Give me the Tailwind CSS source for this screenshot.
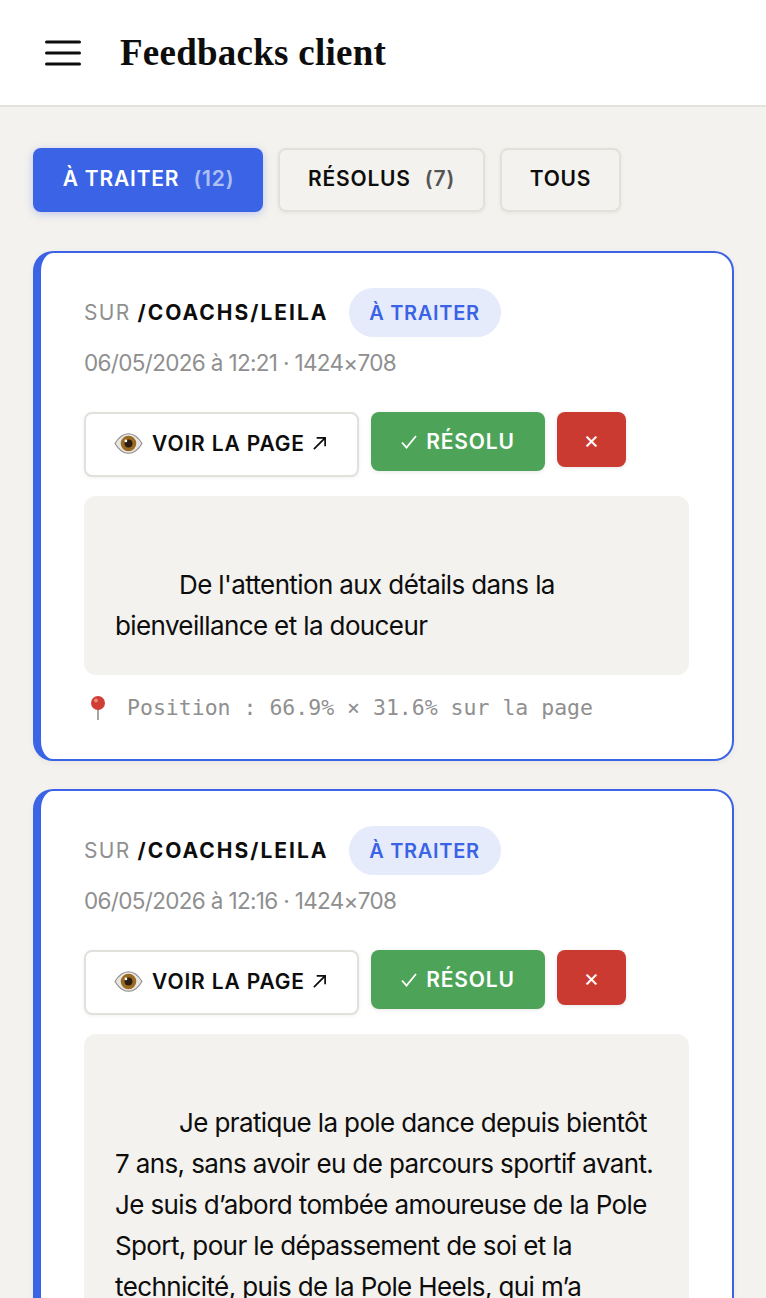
<!DOCTYPE html>
<html lang="fr">
<head>
  <meta charset="UTF-8">
  <meta name="viewport" content="width=device-width, initial-scale=1.0">
  <title>Feedbacks client</title>
  <script src="https://cdn.jsdelivr.net/npm/@tailwindcss/browser@4"></script>
</head>
<body class="bg-[#f4f2ee] h-[1298px] overflow-hidden font-['Inter',sans-serif] text-[#0d0d0d]">
  <!-- Header -->
  <header class="h-[107px] bg-white border-b-2 border-[#e4e2dd] flex items-center pl-[45px] gap-[39px]">
    <svg class="w-[36px] h-[26px]" viewBox="0 0 36 26" fill="none" stroke="#0d0d0d" stroke-width="3" stroke-linecap="round">
      <path d="M1.5 2h33M1.5 13h33M1.5 24h33"/>
    </svg>
    <h1 class="font-['Liberation_Serif',serif] font-bold text-[37px] tracking-[0.25px]">Feedbacks client</h1>
  </header>

  <main class="pl-[33px] pr-[32px] pt-[41px]">
    <!-- Onglets -->
    <div class="flex items-start gap-[15px] text-[21px] font-semibold tracking-[0.8px]">
      <button class="h-[64px] w-[230px] pb-[2px] pl-[1px] rounded-[8px] bg-[#3a63e6] text-white shadow-[0_2px_8px_rgba(58,99,230,0.3)]">À TRAITER <span class="ml-[8px] text-white/60">(12)</span></button>
      <button class="h-[64px] w-[207px] pb-[2px] rounded-[8px] border-2 border-[#e2e0da] shadow-[0_1px_4px_rgba(0,0,0,0.06)]">RÉSOLUS <span class="ml-[8px] text-[#555]">(7)</span></button>
      <button class="h-[64px] w-[121px] pb-[2px] rounded-[8px] border-2 border-[#e2e0da] shadow-[0_1px_4px_rgba(0,0,0,0.06)]">TOUS</button>
    </div>

    <!-- Carte 1 -->
    <article class="mt-[39px] h-[510px] bg-white rounded-[20px] border-2 border-l-[8px] border-[#3a63e6] pl-[43px] pr-[43px] pt-[35px] shadow-[0_2px_6px_rgba(0,0,0,0.05)]">
      <div class="flex items-center h-[49px] text-[21px]">
        <span class="text-[#8f8f8f] tracking-[1.3px]">SUR</span>
        <span class="ml-[7px] font-bold tracking-[2px]">/COACHS/LEILA</span>
        <span class="ml-[20px] h-[49px] w-[152px] flex items-center justify-center rounded-full bg-[#e6ebfb] text-[#3a63e6] font-semibold text-[20px] tracking-[0.7px]">À TRAITER</span>
      </div>
      <p class="mt-[9px] text-[22.5px] leading-[34px] text-[#8f8f8f] tracking-[-0.67px]">06/05/2026 à 12:21 · 1424×708</p>
      <div class="mt-[32px] flex items-start gap-[12px] text-[21px] font-semibold tracking-[0.85px]">
        <button class="h-[65px] w-[275px] pb-[2px] pr-[2px] rounded-[8px] bg-white border-2 border-[#e2e0da] shadow-[0_1px_4px_rgba(0,0,0,0.06)] flex items-center justify-center gap-[9px]">
          <svg class="w-[29px] h-[23px]" viewBox="0 0 28 22">
            <path d="M1 11C5 4 10 1.500 14 1.500S23 4 27 11c-4 7-9 9.500-13 9.500S5 18 1 11z" fill="#e8e6e3" stroke="#8d8a86"/>
            <circle cx="14" cy="11" r="7.500" fill="#9a6a22"/>
            <circle cx="14" cy="11" r="3.800" fill="#2b1d12"/>
            <circle cx="11.500" cy="8.500" r="1.300" fill="#fff"/>
          </svg>
          <span>VOIR LA PAGE</span>
          <svg class="w-[15px] h-[15px] -ml-[2px]" viewBox="0 0 16 16" fill="none" stroke="#0d0d0d" stroke-width="1.800"><path d="M2 14 14 2M5 2h9v9"/></svg>
        </button>
        <button class="h-[59px] w-[174px] rounded-[8px] bg-[#4da458] text-white shadow-[0_1px_4px_rgba(0,0,0,0.1)] flex items-center justify-center gap-[9px]">
          <svg class="w-[16px] h-[14px]" viewBox="0 0 16 14" fill="none" stroke="#fff" stroke-width="1.800"><path d="M1 7.500 5.500 12.500 15 1"/></svg>
          <span>RÉSOLU</span>
        </button>
        <button class="h-[55px] w-[69px] rounded-[8px] bg-[#cb3a30] text-white text-[24px] font-normal tracking-normal shadow-[0_1px_4px_rgba(0,0,0,0.1)]">×</button>
      </div>
      <div class="mt-[19px] rounded-[12px] bg-[#f4f2ee] pl-[31px] pr-[28px] pt-[68px] pb-[29px] text-[26px] leading-[41px] tracking-[-0.62px] indent-[64px]">De l'attention aux détails dans la bienveillance et la douceur</div>
      <p class="mt-[17px] flex items-center font-['DejaVu_Sans_Mono',monospace] text-[21.5px] text-[#8f8f8f]">
        <svg class="w-[16px] h-[26px] ml-[6px] mr-[21px]" viewBox="0 0 16 26">
          <rect x="7.250" y="12" width="1.500" height="13" fill="#8d8680"/>
          <circle cx="8" cy="8" r="7" fill="#cf3f36"/>
          <circle cx="6" cy="5.500" r="2" fill="#ec8a80"/>
        </svg>
        <span>Position : 66.9% × 31.6% sur la page</span>
      </p>
    </article>

    <!-- Carte 2 -->
    <article class="mt-[28px] h-[700px] bg-white rounded-[20px] border-2 border-l-[8px] border-[#3a63e6] pl-[43px] pr-[43px] pt-[35px] shadow-[0_2px_6px_rgba(0,0,0,0.05)]">
      <div class="flex items-center h-[49px] text-[21px]">
        <span class="text-[#8f8f8f] tracking-[1.3px]">SUR</span>
        <span class="ml-[7px] font-bold tracking-[2px]">/COACHS/LEILA</span>
        <span class="ml-[20px] h-[49px] w-[152px] flex items-center justify-center rounded-full bg-[#e6ebfb] text-[#3a63e6] font-semibold text-[20px] tracking-[0.7px]">À TRAITER</span>
      </div>
      <p class="mt-[9px] text-[22.5px] leading-[34px] text-[#8f8f8f] tracking-[-0.67px]">06/05/2026 à 12:16 · 1424×708</p>
      <div class="mt-[32px] flex items-start gap-[12px] text-[21px] font-semibold tracking-[0.85px]">
        <button class="h-[65px] w-[275px] pb-[2px] pr-[2px] rounded-[8px] bg-white border-2 border-[#e2e0da] shadow-[0_1px_4px_rgba(0,0,0,0.06)] flex items-center justify-center gap-[9px]">
          <svg class="w-[29px] h-[23px]" viewBox="0 0 28 22">
            <path d="M1 11C5 4 10 1.500 14 1.500S23 4 27 11c-4 7-9 9.500-13 9.500S5 18 1 11z" fill="#e8e6e3" stroke="#8d8a86"/>
            <circle cx="14" cy="11" r="7.500" fill="#9a6a22"/>
            <circle cx="14" cy="11" r="3.800" fill="#2b1d12"/>
            <circle cx="11.500" cy="8.500" r="1.300" fill="#fff"/>
          </svg>
          <span>VOIR LA PAGE</span>
          <svg class="w-[15px] h-[15px] -ml-[2px]" viewBox="0 0 16 16" fill="none" stroke="#0d0d0d" stroke-width="1.800"><path d="M2 14 14 2M5 2h9v9"/></svg>
        </button>
        <button class="h-[59px] w-[174px] rounded-[8px] bg-[#4da458] text-white shadow-[0_1px_4px_rgba(0,0,0,0.1)] flex items-center justify-center gap-[9px]">
          <svg class="w-[16px] h-[14px]" viewBox="0 0 16 14" fill="none" stroke="#fff" stroke-width="1.800"><path d="M1 7.500 5.500 12.500 15 1"/></svg>
          <span>RÉSOLU</span>
        </button>
        <button class="h-[55px] w-[69px] rounded-[8px] bg-[#cb3a30] text-white text-[24px] font-normal tracking-normal shadow-[0_1px_4px_rgba(0,0,0,0.1)]">×</button>
      </div>
      <div class="mt-[19px] rounded-[12px] bg-[#f4f2ee] pl-[31px] pr-[28px] pt-[68px] pb-[160px] text-[26px] leading-[41px] tracking-[-0.62px] indent-[64px]">Je pratique la pole dance depuis bientôt 7 ans, sans avoir eu de parcours sportif avant. Je suis d’abord tombée amoureuse de la Pole Sport, pour le dépassement de soi et la technicité, puis de la Pole Heels, qui m’a</div>
    </article>
  </main>
</body>
</html>
